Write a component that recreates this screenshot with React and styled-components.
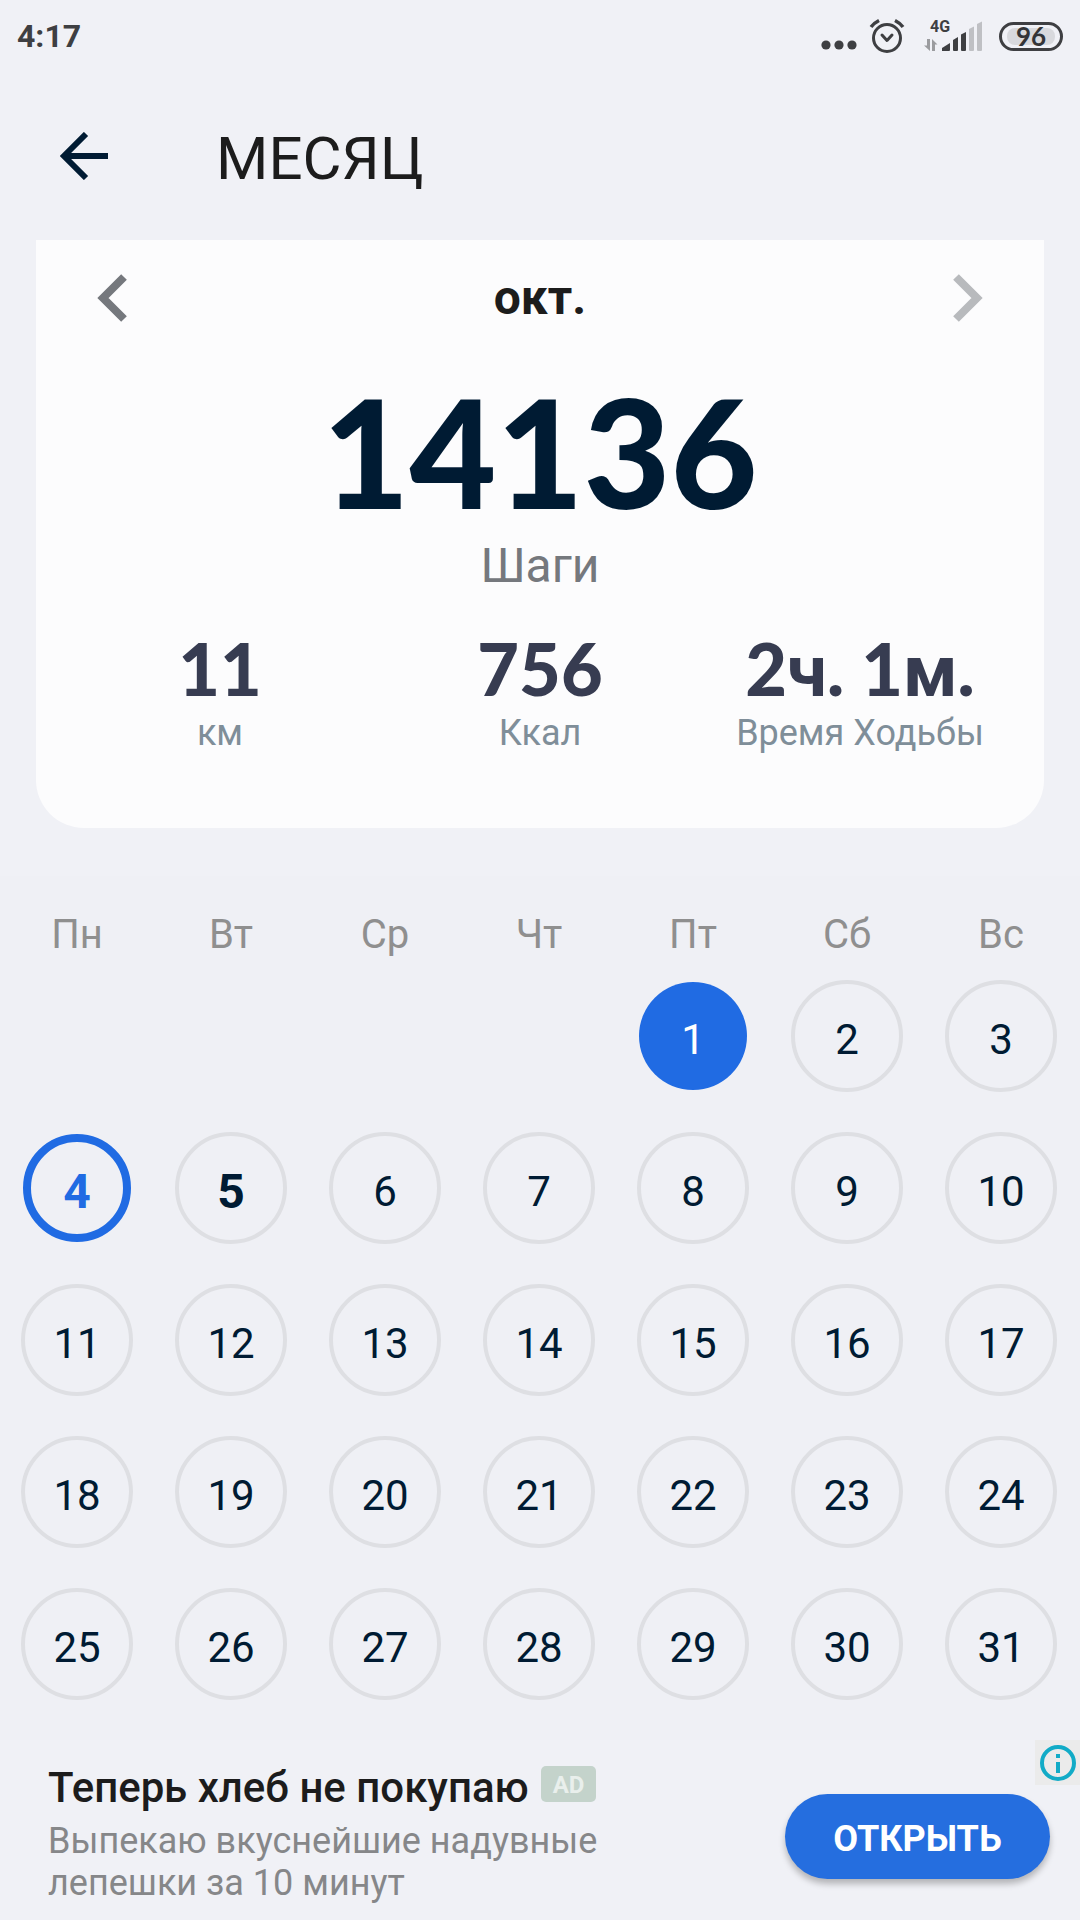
import { useState } from 'react';
import styled, { createGlobalStyle, css } from 'styled-components';

const GlobalStyle = createGlobalStyle`
    * {
        box-sizing: border-box;
    }
    body {
        margin: 0;
        background: #f0f1f6;
        font-family: Roboto, 'Noto Sans', sans-serif;
        color: #1c1c1c;
    }
    button {
        border: 0;
        padding: 0;
        background: none;
        font-family: inherit;
        cursor: pointer;
    }
`;

const Page = styled.div`
    min-height: 100vh;
    display: flex;
    flex-direction: column;
`;

const StatusBar = styled.div`
    height: 72px;
    padding: 0 17px;
    display: flex;
    align-items: center;
    justify-content: space-between;
    color: #3e3f42;
`;

const Time = styled.span`
    font-size: 32px;
    line-height: 40px;
    font-weight: 700;
`;

const StatusIcons = styled.div`
    display: flex;
    align-items: center;
    gap: 12px;
`;

const Battery = styled.span`
    width: 64px;
    height: 29px;
    padding: 3px 5px;
    border: 3px solid #3e3f42;
    border-radius: 15px;
    display: flex;
`;

const BatteryLevel = styled.span`
    flex: 1;
    display: flex;
    align-items: center;
    justify-content: center;
    border-radius: 8px;
    background: #d8d9dd;
    color: #333437;
    font-family: Lato, sans-serif;
    font-size: 26px;
    line-height: 26px;
    font-weight: 700;
`;

const Header = styled.header`
    height: 168px;
    padding: 0 56px;
    display: flex;
    align-items: center;
    gap: 104px;
`;

const BackButton = styled.button`
    width: 56px;
    height: 56px;
    display: flex;
    align-items: center;
`;

const Title = styled.h1`
    margin: 0;
    padding-top: 6px;
    font-size: 60px;
    line-height: 72px;
    font-weight: 400;
`;

const SummaryCard = styled.section`
    margin: 0 36px 48px;
    padding: 22px 24px 74px;
    background: #fcfcfd;
    border-radius: 0 0 48px 48px;
    text-align: center;
`;

const MonthSwitcher = styled.div`
    height: 72px;
    padding: 0 24px;
    display: flex;
    align-items: center;
    justify-content: space-between;
`;

const SwitchButton = styled.button`
    width: 56px;
    height: 72px;
    display: flex;
    align-items: center;
    justify-content: center;
    color: #75787d;

    &:disabled {
        color: #b8babd;
        cursor: default;
    }
`;

const MonthName = styled.h2`
    margin: 0;
    font-size: 48px;
    line-height: 72px;
    font-weight: 700;
`;

const StepsValue = styled.div`
    margin-top: 28px;
    font-family: Lato, sans-serif;
    font-size: 150px;
    line-height: 178px;
    font-weight: 900;
    color: #001b33;
`;

const StepsLabel = styled.div`
    font-size: 48px;
    line-height: 52px;
    color: #75787d;
`;

const Stats = styled.div`
    margin-top: 32px;
    display: grid;
    grid-template-columns: repeat(3, 1fr);
`;

const StatValue = styled.div`
    height: 88px;
    font-family: Lato, sans-serif;
    font-size: 72px;
    line-height: 88px;
    font-weight: 900;
    color: #373c51;
    white-space: nowrap;
`;

const Unit = styled.span`
    font-family: Roboto, sans-serif;
    font-weight: 700;
`;

const StatLabel = styled.div`
    font-size: 36px;
    line-height: 42px;
    color: #7f8e99;
    white-space: nowrap;
`;

const CalendarArea = styled.section`
    flex: 1;
    padding: 34px 2px 20px 0;
    background: #eff0f5;
`;

const Calendar = styled.table`
    width: 100%;
    table-layout: fixed;
    border-collapse: collapse;
`;

const Weekday = styled.th`
    height: 50px;
    padding: 0;
    font-size: 40px;
    line-height: 50px;
    font-weight: 400;
    color: #8f8f8f;
`;

const DayCell = styled.td`
    height: 152px;
    padding: 0;
`;

const Day = styled.button`
    width: 112px;
    height: 112px;
    margin: 0 auto;
    padding-top: 8px;
    display: flex;
    align-items: center;
    justify-content: center;
    border: 4px solid #dedfe3;
    border-radius: 50%;
    font-size: 42px;
    line-height: 48px;
    color: #001b33;

    ${({ $kind }) =>
        $kind === 'bold' &&
        css`
            font-size: 48px;
            font-weight: 700;
        `}
    ${({ $kind }) =>
        $kind === 'filled' &&
        css`
            width: 108px;
            height: 108px;
            border: 0;
            background: #206be3;
            color: #fff;
        `}
    ${({ $kind }) =>
        $kind === 'ring' &&
        css`
            width: 108px;
            height: 108px;
            border: 8px solid #206be3;
            font-size: 48px;
            font-weight: 700;
            color: #206be3;
        `}
`;

const AdBanner = styled.aside`
    position: relative;
    min-height: 180px;
    padding: 18px 30px 16px 48px;
    display: flex;
    align-items: flex-start;
    justify-content: space-between;
`;

const AdTitle = styled.div`
    display: flex;
    align-items: center;
    gap: 12px;
    font-size: 42px;
    line-height: 60px;
    font-weight: 500;
    white-space: nowrap;
`;

const AdBadge = styled.span`
    height: 36px;
    padding: 0 12px;
    margin-bottom: 8px;
    border-radius: 5px;
    background: #c4d3cb;
    color: #e9efec;
    font-size: 24px;
    line-height: 38px;
    font-weight: 700;
`;

const AdText = styled.p`
    margin: 2px 0 0;
    max-width: 600px;
    font-size: 36px;
    line-height: 42px;
    color: #868789;
`;

const OpenButton = styled.button`
    flex: none;
    width: 265px;
    height: 85px;
    margin-top: 36px;
    padding-top: 4px;
    border-radius: 43px;
    background: #256edf;
    box-shadow: 0 5px 6px rgba(0, 0, 0, 0.25);
    color: #fff;
    font-size: 36px;
    line-height: 42px;
    font-weight: 700;
`;

const AdInfoButton = styled.button`
    position: absolute;
    top: 0;
    right: 0;
    width: 45px;
    height: 45px;
    display: flex;
    align-items: center;
    justify-content: center;
    background: #ebebeb;
`;

const weekdays = ['Пн', 'Вт', 'Ср', 'Чт', 'Пт', 'Сб', 'Вс'];

const FIRST_WEEKDAY = 4;
const DAYS_IN_MONTH = 31;
const TODAY = 5;
const GOAL_REACHED = 1;

const weeks = Array.from({ length: 5 }, (_, week) =>
    Array.from({ length: 7 }, (_, i) => {
        const day = week * 7 + i + 1 - FIRST_WEEKDAY;
        return day > 0 && day <= DAYS_IN_MONTH ? day : null;
    })
);

function DotsIcon() {
    return (
        <svg width="36" height="34" viewBox="0 0 36 34" fill="#3e3f42">
            <circle cx="5" cy="26" r="4.6" />
            <circle cx="18" cy="26" r="4.6" />
            <circle cx="31" cy="26" r="4.6" />
        </svg>
    );
}

function AlarmIcon() {
    return (
        <svg
            width="42"
            height="36"
            viewBox="0 0 42 36"
            fill="none"
            stroke="#3e3f42"
            strokeWidth="3"
            strokeLinecap="round"
            strokeLinejoin="round"
        >
            <circle cx="18" cy="20" r="13.5" />
            <path d="M13 17l5 5.5 5-5.5" />
            <path d="M2 9Q5 5 10 2.500M34 9Q31 5 26 2.500" strokeLinecap="butt" strokeWidth="3.5" />
        </svg>
    );
}

function SignalIcon() {
    return (
        <svg width="64" height="46" viewBox="0 -6 64 46" fill="#3e3f42">
            <text x="7" y="13" fontSize="16" fontWeight="700" fontFamily="Roboto, sans-serif">
                4G
            </text>
            <g fill="#9b9c9f">
                <path d="M4 20h3v12L1 26.500h3z" />
                <path d="M9 20l5.500 5.500H12V32H9z" />
            </g>
            <path d="M19 32v-3l8-5v7q0 1-1 1z" />
            <path d="M30 21l5-3v13q0 1-1 1h-3q-1 0-1-1z" />
            <path d="M38 15.500l5-2.500v18q0 1-1 1h-3q-1 0-1-1z" />
            <path d="M46 10l5-2.500v23.500q0 1-1 1h-3q-1 0-1-1z" fill="#bfc0c4" />
            <path d="M54 5l5-2.500v28.500q0 1-1 1h-3q-1 0-1-1z" fill="#bfc0c4" />
        </svg>
    );
}

function BackIcon() {
    return (
        <svg width="56" height="48" viewBox="0 0 56 48" fill="none" stroke="#001b33" strokeWidth="6">
            <path d="M30 2L8 24l22 22M8 24h44" />
        </svg>
    );
}

function ChevronIcon({ right }) {
    return (
        <svg width="30" height="48" viewBox="0 0 30 48" fill="none" stroke="currentColor" strokeWidth="8">
            <path d={right ? 'M3 3l21 21L3 45' : 'M27 3L6 24l21 21'} />
        </svg>
    );
}

function InfoIcon() {
    return (
        <svg width="36" height="36" viewBox="0 0 36 36">
            <circle cx="18" cy="18" r="16" fill="none" stroke="#12abc7" strokeWidth="4" />
            <path d="M16 9h4v4h-4zM16 17h4v11h-4z" fill="#12abc7" />
        </svg>
    );
}

export default function App() {
    const [selected, setSelected] = useState(4);

    const dayKind = (day) => {
        if (day === selected) return 'ring';
        if (day === GOAL_REACHED) return 'filled';
        if (day === TODAY) return 'bold';
        return 'plain';
    };

    return (
        <>
            <GlobalStyle />
            <Page>
                <StatusBar>
                    <Time>4:17</Time>
                    <StatusIcons>
                        <DotsIcon />
                        <AlarmIcon />
                        <SignalIcon />
                        <Battery>
                            <BatteryLevel>96</BatteryLevel>
                        </Battery>
                    </StatusIcons>
                </StatusBar>

                <Header>
                    <BackButton aria-label="Назад">
                        <BackIcon />
                    </BackButton>
                    <Title>МЕСЯЦ</Title>
                </Header>

                <SummaryCard>
                    <MonthSwitcher>
                        <SwitchButton aria-label="Предыдущий месяц">
                            <ChevronIcon />
                        </SwitchButton>
                        <MonthName>окт.</MonthName>
                        <SwitchButton aria-label="Следующий месяц" disabled>
                            <ChevronIcon right />
                        </SwitchButton>
                    </MonthSwitcher>
                    <StepsValue>14136</StepsValue>
                    <StepsLabel>Шаги</StepsLabel>
                    <Stats>
                        <div>
                            <StatValue>11</StatValue>
                            <StatLabel>км</StatLabel>
                        </div>
                        <div>
                            <StatValue>756</StatValue>
                            <StatLabel>Ккал</StatLabel>
                        </div>
                        <div>
                            <StatValue>
                                2<Unit>ч</Unit>. 1<Unit>м</Unit>.
                            </StatValue>
                            <StatLabel>Время Ходьбы</StatLabel>
                        </div>
                    </Stats>
                </SummaryCard>

                <CalendarArea>
                    <Calendar>
                        <thead>
                            <tr>
                                {weekdays.map((name) => (
                                    <Weekday key={name} scope="col">
                                        {name}
                                    </Weekday>
                                ))}
                            </tr>
                        </thead>
                        <tbody>
                            {weeks.map((week, index) => (
                                <tr key={index}>
                                    {week.map((day, i) => (
                                        <DayCell key={i}>
                                            {day && (
                                                <Day $kind={dayKind(day)} onClick={() => setSelected(day)}>
                                                    {day}
                                                </Day>
                                            )}
                                        </DayCell>
                                    ))}
                                </tr>
                            ))}
                        </tbody>
                    </Calendar>
                </CalendarArea>

                <AdBanner>
                    <div>
                        <AdTitle>
                            Теперь хлеб не покупаю <AdBadge>AD</AdBadge>
                        </AdTitle>
                        <AdText>Выпекаю вкуснейшие надувные лепешки за 10 минут</AdText>
                    </div>
                    <OpenButton>ОТКРЫТЬ</OpenButton>
                    <AdInfoButton aria-label="Об этой рекламе">
                        <InfoIcon />
                    </AdInfoButton>
                </AdBanner>
            </Page>
        </>
    );
}
